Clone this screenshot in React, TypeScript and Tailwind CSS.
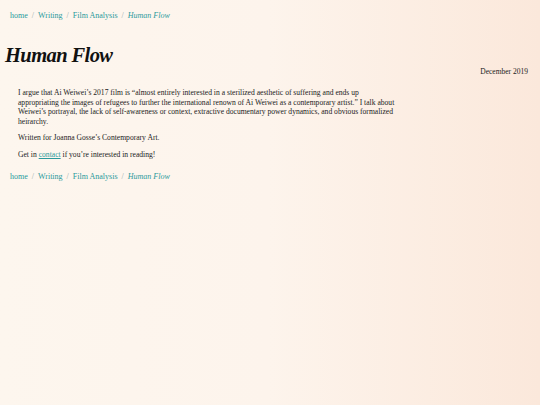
const SERIF = "font-['Liberation_Serif','DejaVu_Serif',serif]";

const CRUMBS = ["home", "Writing", "Film Analysis"];

function Breadcrumb() {
  return (
    <nav className="flex items-center gap-[4px] text-[8px] leading-none text-[#2a9a9c]">
      {CRUMBS.map((c) => (
        <span key={c} className="flex items-center gap-[4px]">
          <a href="#">{c}</a>
          <span className="text-[#9aa]">/</span>
        </span>
      ))}
      <span className="italic">Human Flow</span>
    </nav>
  );
}

export default function App() {
  return (
    <div
      className={`${SERIF} w-[540px] h-[405px] overflow-hidden bg-gradient-to-r from-[#fdf6ee] via-[#fdf4ec] to-[#fbe8db] text-[#222]`}
    >
      <div className="px-[10px] pt-[12px]">
        <Breadcrumb />
      </div>

      <h1 className="pl-[5px] mt-[25px] text-[20.5px] leading-none font-bold italic tracking-[-0.6px] text-[#111]">
        Human Flow
      </h1>
      <div className="flex justify-end pr-[12px] mt-[2px]">
        <span className="text-[7.5px] leading-none">December 2019</span>
      </div>

      <div className="pl-[18px] mt-[13px] text-[7.6px] leading-[9.6px] whitespace-nowrap">
        <p>
          I argue that Ai Weiwei’s 2017 film is “almost entirely interested in a sterilized aesthetic of
          suffering and ends up
          <br />
          appropriating the images of refugees to further the international renown of Ai Weiwei as a
          contemporary artist.” I talk about
          <br />
          Weiwei’s portrayal, the lack of self-awareness or context, extractive documentary power dynamics,
          and obvious formalized
          <br />
          heirarchy.
        </p>
        <p className="mt-[7px]">Written for Joanna Gosse’s Contemporary Art.</p>
        <p className="mt-[7px]">
          Get in{" "}
          <a href="#" className="text-[#2a9a9c] underline">
            contact
          </a>{" "}
          if you’re interested in reading!
        </p>
      </div>

      <div className="px-[10px] mt-[13px]">
        <Breadcrumb />
      </div>
    </div>
  );
}
